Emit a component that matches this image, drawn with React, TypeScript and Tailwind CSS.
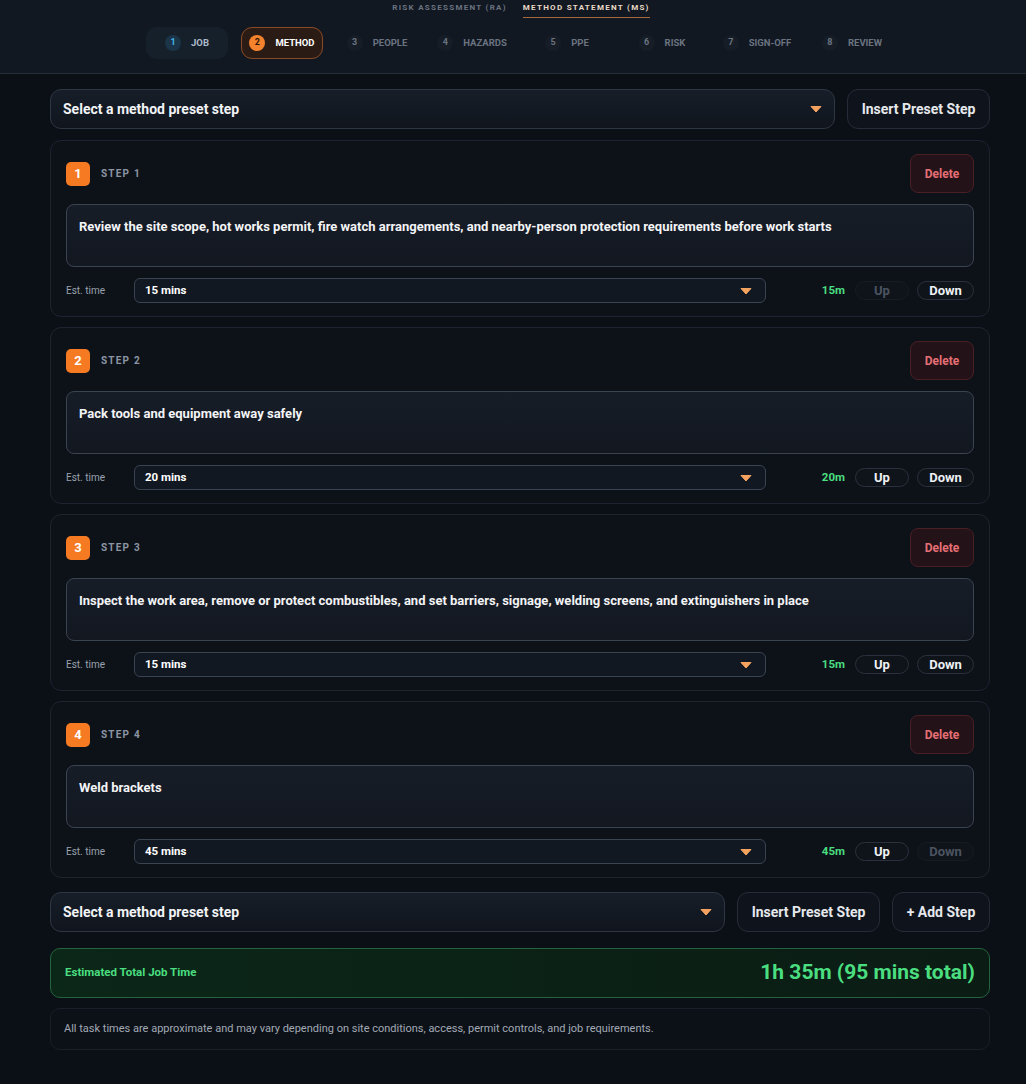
import React from "react";

type Step = {
  n: number;
  text: string;
  mins: number;
};

const steps: Step[] = [
  {
    n: 1,
    text: "Review the site scope, hot works permit, fire watch arrangements, and nearby-person protection requirements before work starts",
    mins: 15,
  },
  { n: 2, text: "Pack tools and equipment away safely", mins: 20 },
  {
    n: 3,
    text: "Inspect the work area, remove or protect combustibles, and set barriers, signage, welding screens, and extinguishers in place",
    mins: 15,
  },
  { n: 4, text: "Weld brackets", mins: 45 },
];

const wizard = [
  { n: 1, label: "JOB", state: "done" },
  { n: 2, label: "METHOD", state: "active" },
  { n: 3, label: "PEOPLE", state: "todo" },
  { n: 4, label: "HAZARDS", state: "todo" },
  { n: 5, label: "PPE", state: "todo" },
  { n: 6, label: "RISK", state: "todo" },
  { n: 7, label: "SIGN-OFF", state: "todo" },
  { n: 8, label: "REVIEW", state: "todo" },
];

const font = { fontFamily: "Roboto, 'Liberation Sans', sans-serif" };

function Caret({ className = "" }: { className?: string }) {
  return (
    <svg viewBox="0 0 12 8" className={`w-[12px] h-[8px] ${className}`}>
      <path d="M1 1.5 L11 1.5 L6 7 Z" fill="#f3a35f" stroke="#f3a35f" strokeWidth="1" strokeLinejoin="round" />
    </svg>
  );
}

function PresetSelect() {
  return (
    <div className="flex-1 h-[40px] flex items-center justify-between pl-[12px] pr-[12px] rounded-[11px] border border-[#2e3642] bg-gradient-to-b from-[#171e29] to-[#10151d]">
      <span className="text-[14px] font-bold text-[#f1f3f6]">Select a method preset step</span>
      <Caret />
    </div>
  );
}

function GhostButton({ children, w }: { children: React.ReactNode; w: string }) {
  return (
    <button className={`${w} h-[40px] rounded-[11px] border border-[#252c37] bg-[#0f141c] text-[14px] font-bold text-[#e6e8ec] flex items-center justify-center`}>
      {children}
    </button>
  );
}

function StepCard({ step, first, last }: { step: Step; first: boolean; last: boolean }) {
  return (
    <div className="rounded-[11px] border border-[#1d2430] bg-[#0d1219] px-[15px] pt-[13px] pb-[13px] flex flex-col gap-[11px]">
      <div className="flex items-center justify-between h-[39px]">
        <div className="flex items-center gap-[11px]">
          <div className="w-[24px] h-[24px] rounded-[5px] bg-[#f57a22] flex items-center justify-center text-[13px] font-bold text-white">
            {step.n}
          </div>
          <span className="text-[10px] font-bold tracking-[0.12em] text-[#8c95a3]">STEP {step.n}</span>
        </div>
        <button className="w-[64px] h-[39px] rounded-[8px] border border-[#4a1e25] bg-[#231318] text-[12px] font-bold text-[#e56f74]">
          Delete
        </button>
      </div>
      <div className="h-[63px] rounded-[8px] border border-[#3a4350] bg-gradient-to-b from-[#171d27] to-[#121720] px-[12px] pt-[12px] text-[13px] font-bold text-[#f3f4f6]">
        {step.text}
      </div>
      <div className="flex items-center h-[25px]">
        <span className="w-[68px] text-[10px] text-[#9aa2ae]">Est. time</span>
        <div className="w-[632px] h-[25px] rounded-[6px] border border-[#3a4350] bg-[#121821] flex items-center justify-between pl-[10px] pr-[13px]">
          <span className="text-[11.5px] font-bold text-white">{step.mins} mins</span>
          <Caret />
        </div>
        <div className="flex-1 flex items-center justify-end gap-[8px]">
          <span className="text-[11.5px] font-bold text-[#4ade80] mr-[2px]">{step.mins}m</span>
          <button
            className={`w-[54px] h-[19px] rounded-full border text-[13px] font-bold flex items-center justify-center ${
              first ? "border-[#161c25] bg-[#0f141b] text-[#4b5360]" : "border-[#2a313c] bg-[#0f141b] text-[#eef0f3]"
            }`}
          >
            Up
          </button>
          <button
            className={`w-[57px] h-[19px] rounded-full border text-[13px] font-bold flex items-center justify-center ${
              last ? "border-[#161c25] bg-[#0f141b] text-[#4b5360]" : "border-[#2a313c] bg-[#0f141b] text-[#eef0f3]"
            }`}
          >
            Down
          </button>
        </div>
      </div>
    </div>
  );
}

export default function App() {
  return (
    <div style={font} className="min-h-[1084px] w-full bg-[#0b1017] text-white">
      {/* Header: document tabs + wizard steps */}
      <div className="h-[74px] bg-[#111822] border-b border-[#262e39] flex flex-col items-center">
        <div className="flex items-start gap-[16px] h-[20px] pt-[1px] pl-[16px]">
          <span className="text-[8px] font-bold tracking-[0.16em] text-[#6b7380] pt-[1px]">RISK ASSESSMENT (RA)</span>
          <span className="text-[8px] font-bold tracking-[0.16em] text-[#ead9c6] pt-[1px] pb-[3px] border-b border-[#a8693b]">
            METHOD STATEMENT (MS)
          </span>
        </div>
        <div className="flex items-center gap-[13px] pl-[13px] mt-[7px]">
          {wizard.map((w) => (
            <div
              key={w.n}
              className={`w-[82px] h-[32px] rounded-[11px] flex items-center justify-center gap-[10px] ${
                w.state === "done"
                  ? "bg-[#16202b]"
                  : w.state === "active"
                  ? "bg-[#2a1c15] border border-[#8a4a25]"
                  : ""
              }`}
            >
              <span
                className={`w-[16px] h-[16px] rounded-full flex items-center justify-center text-[9px] font-bold ${
                  w.state === "done"
                    ? "bg-[#1b3447] text-[#3fb5ea]"
                    : w.state === "active"
                    ? "bg-[#f5822c] text-[#2a1208]"
                    : "bg-[#161d27] text-[#6b7380]"
                }`}
              >
                {w.n}
              </span>
              <span
                className={`text-[9.5px] font-bold ${
                  w.state === "done" ? "text-[#aebccc]" : w.state === "active" ? "text-white" : "text-[#6b7380]"
                }`}
              >
                {w.label}
              </span>
            </div>
          ))}
        </div>
      </div>

      {/* Method steps editor */}
      <div className="w-[940px] ml-[50px] pt-[15px] flex flex-col">
        <div className="flex gap-[12px]">
          <PresetSelect />
          <GhostButton w="w-[143px]">Insert Preset Step</GhostButton>
        </div>

        <div className="flex flex-col gap-[10px] mt-[11px]">
          {steps.map((s, i) => (
            <StepCard key={s.n} step={s} first={i === 0} last={i === steps.length - 1} />
          ))}
        </div>

        <div className="flex gap-[12px] mt-[14px]">
          <PresetSelect />
          <GhostButton w="w-[143px]">Insert Preset Step</GhostButton>
          <GhostButton w="w-[98px]">+ Add Step</GhostButton>
        </div>

        <div className="mt-[16px] h-[50px] rounded-[10px] border border-[#23633d] bg-gradient-to-r from-[#0b2718] to-[#0b1c14] flex items-center justify-between px-[14px]">
          <span className="text-[11.5px] font-bold text-[#4ade80]">Estimated Total Job Time</span>
          <span className="text-[21px] font-bold text-[#4ade80]">1h 35m (95 mins total)</span>
        </div>

        <div className="mt-[10px] h-[42px] rounded-[10px] border border-[#1a2029] bg-[#0c1118] flex items-center px-[13px]">
          <span className="text-[11px] text-[#a2a9b4]">
            All task times are approximate and may vary depending on site conditions, access, permit controls, and job requirements.
          </span>
        </div>
      </div>
    </div>
  );
}
